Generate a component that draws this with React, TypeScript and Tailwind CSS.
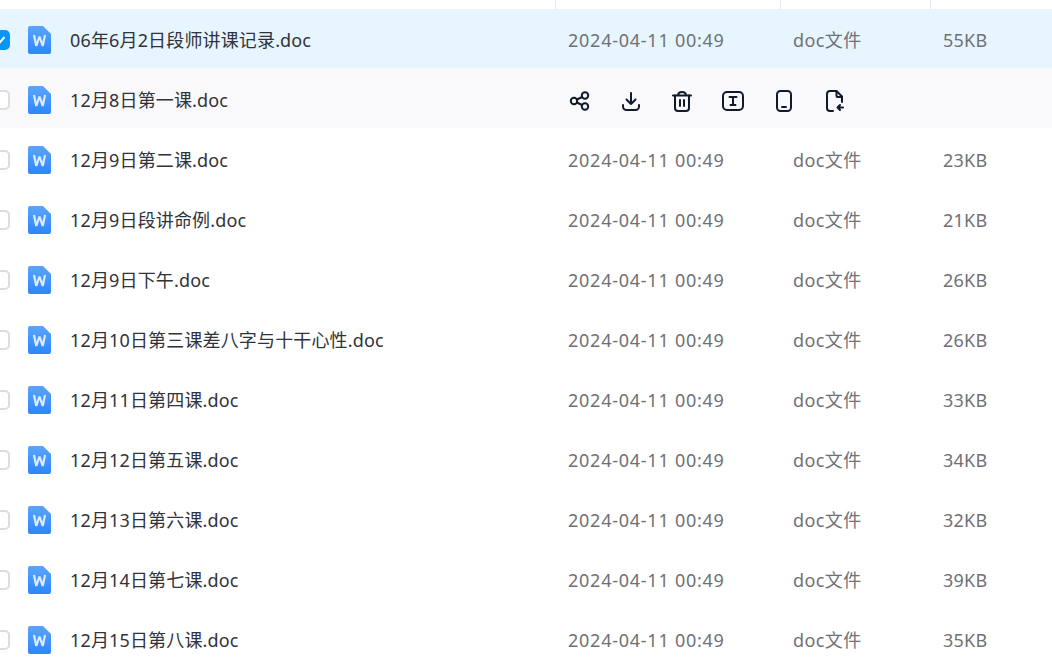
const files = [
  { name: '06年6月2日段师讲课记录.doc', size: '55KB' },
  { name: '12月8日第一课.doc', size: '' },
  { name: '12月9日第二课.doc', size: '23KB' },
  { name: '12月9日段讲命例.doc', size: '21KB' },
  { name: '12月9日下午.doc', size: '26KB' },
  { name: '12月10日第三课差八字与十干心性.doc', size: '26KB' },
  { name: '12月11日第四课.doc', size: '33KB' },
  { name: '12月12日第五课.doc', size: '34KB' },
  { name: '12月13日第六课.doc', size: '32KB' },
  { name: '12月14日第七课.doc', size: '39KB' },
  { name: '12月15日第八课.doc', size: '35KB' },
];

function DocIcon() {
  return (
    <svg width="23" height="28" viewBox="0 0 23 28" className="shrink-0">
      <defs>
        <linearGradient id="docFill" x1="0" y1="0" x2="0" y2="1">
          <stop offset="0" stopColor="#5aa5fb" />
          <stop offset="1" stopColor="#2f86fb" />
        </linearGradient>
      </defs>
      <path d="M2 0H15L23 8V26a2 2 0 0 1-2 2H2a2 2 0 0 1-2-2V2a2 2 0 0 1 2-2Z" fill="url(#docFill)" />
      <path d="M6 9 8.300 20 11.500 10.500 14.700 20 17 9" fill="none" stroke="#dcebff" strokeWidth="2.200" strokeLinejoin="miter" strokeMiterlimit="2" />
    </svg>
  );
}

function Checkbox({ checked }: { checked: boolean }) {
  if (checked) {
    return (
      <div className="w-5 h-5 -ml-[10px] shrink-0 rounded-[5px] bg-[#0a95fb] flex items-center justify-center">
        <svg width="12" height="12" viewBox="0 0 12 12" fill="none">
          <path d="M2 6.500 5 9.500 10.500 3" stroke="#fff" strokeWidth="2" />
        </svg>
      </div>
    );
  }
  return <div className="w-5 h-5 -ml-[10px] shrink-0 rounded-[5px] border-2 border-[#dddddf] bg-white" />;
}

function Actions() {
  const stroke = { fill: 'none', stroke: '#0f1a2b', strokeWidth: 2, strokeLinecap: 'round', strokeLinejoin: 'round' } as const;
  return (
    <div className="flex items-center gap-[27px] mt-[1px]">
      <svg width="24" height="24" viewBox="0 0 24 24" {...stroke}>
        <circle cx="6" cy="12" r="3.200" />
        <circle cx="17" cy="6.500" r="3.200" />
        <circle cx="17" cy="17.500" r="3.200" />
        <path d="M8.900 10.500 14.100 8M8.900 13.500 14.100 16" />
      </svg>
      <svg width="24" height="24" viewBox="0 0 24 24" {...stroke}>
        <path d="M12 4V15M7.500 10.500 12 15l4.500-4.500" />
        <path d="M4 16v1.500A3.500 3.500 0 0 0 7.500 21h9a3.500 3.500 0 0 0 3.500-3.500V16" />
      </svg>
      <svg width="24" height="24" viewBox="0 0 24 24" {...stroke}>
        <path d="M3 6.500H21M8 6.500C8 4 9.500 3 12 3s4 1 4 3.500" />
        <path d="M5 6.500V19a3 3 0 0 0 3 3h8a3 3 0 0 0 3-3V6.500" />
        <path d="M10 11v6M14 11v6" />
      </svg>
      <svg width="24" height="24" viewBox="0 0 24 24" {...stroke}>
        <rect x="2" y="3" width="20" height="18" rx="4" />
        <path d="M8.500 8H15.500M12 8V16M9.500 16H14.500" />
      </svg>
      <svg width="24" height="24" viewBox="0 0 24 24" {...stroke}>
        <rect x="5" y="2" width="14" height="20" rx="3.500" />
        <path d="M10 18H14" />
      </svg>
      <svg width="24" height="24" viewBox="1 0 24 24" {...stroke}>
        <path d="M11 22H8a3 3 0 0 1-3-3V5a3 3 0 0 1 3-3h6.500L20 7.500V13" />
        <path d="M14.500 2.500V7a1 1 0 0 0 1 1H20" />
        <path d="M21 18.500H15.500M18 16l-2.500 2.500L18 21" />
      </svg>
    </div>
  );
}

function FileRow({ name, size, index }: { name: string; size: string; index: number }) {
  const selected = index === 0;
  const hovered = index === 1;
  const bg = selected ? 'bg-[#e7f5fe] h-[59px] pt-[3px]' : hovered ? 'bg-[#f9f9fc] h-[60px] pt-[4px]' : 'bg-white h-[60px] pt-[4px]';
  return (
    <div className={`flex items-center ${bg}`}>
      <div className="w-[555px] shrink-0 flex items-center">
        <Checkbox checked={selected} />
        <div className="ml-[18px]"><DocIcon /></div>
        <span className="ml-[19px] text-[#30333a] whitespace-nowrap tracking-[0.15px]">{name}</span>
      </div>
      {hovered ? (
        <div className="pl-[13px]"><Actions /></div>
      ) : (
        <>
          <div className="w-[225px] shrink-0 pl-[13px] text-[#6f7176] whitespace-nowrap tracking-[0.75px]">2024-04-11 00:49</div>
          <div className="w-[150px] shrink-0 pl-[13px] text-[#6f7176] whitespace-nowrap tracking-[0.4px]">doc文件</div>
          <div className="flex-1 pl-[13px] text-[#6f7176] whitespace-nowrap tracking-[0.25px]">{size}</div>
        </>
      )}
    </div>
  );
}

export default function App() {
  return (
    <div className="w-[1052px] h-[672px] overflow-hidden bg-white text-[18px] font-['Noto_Sans','Noto_Sans_CJK_SC',sans-serif]">
      <div className="h-[9px] flex">
        <div className="w-[556px] border-r border-[#e8e8ea]" />
        <div className="w-[225px] border-r border-[#e8e8ea]" />
        <div className="w-[150px] border-r border-[#e8e8ea]" />
      </div>
      {files.map((f, i) => (
        <FileRow key={f.name} name={f.name} size={f.size} index={i} />
      ))}
    </div>
  );
}
